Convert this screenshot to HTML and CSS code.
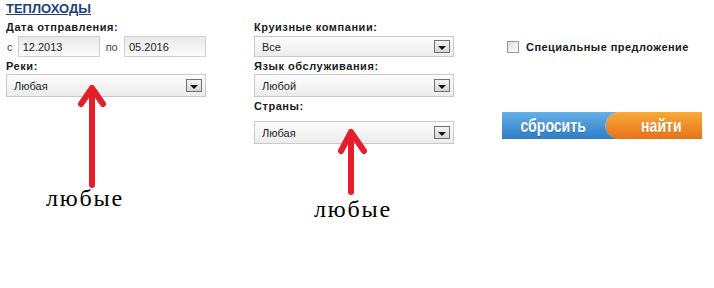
FILE: index.html
```html
<!DOCTYPE html>
<html lang="ru">
<head>
    <meta charset="UTF-8">
    <title>Теплоходы</title>
    <link rel="stylesheet" href="styles.css">
</head>
<body>
    <div class="search">
        <a href="#" class="search-title">ТЕПЛОХОДЫ</a>
        <div class="search-row">
            <!-- левая колонка -->
            <div class="search-col">
                <div class="label">Дата отправления:</div>
                <div class="dates">
                    <span class="dates-word">с</span>
                    <input class="date-input" type="text" value="12.2013">
                    <span class="dates-word dates-word-to">по</span>
                    <input class="date-input" type="text" value="05.2016">
                </div>
                <div class="label label-second">Реки:</div>
                <div class="select">
                    <span class="select-text">Любая</span>
                    <span class="select-btn"></span>
                </div>
            </div>
            <!-- средняя колонка -->
            <div class="search-col">
                <div class="label">Круизные компании:</div>
                <div class="select select-short">
                    <span class="select-text">Все</span>
                    <span class="select-btn"></span>
                </div>
                <div class="label label-second">Язык обслуживания:</div>
                <div class="select">
                    <span class="select-text">Любой</span>
                    <span class="select-btn"></span>
                </div>
                <div class="label label-third">Страны:</div>
                <div class="select select-last">
                    <span class="select-text">Любая</span>
                    <span class="select-btn"></span>
                </div>
            </div>
            <!-- правая колонка -->
            <div class="search-col search-col-right">
                <label class="special">
                    <span class="checkbox"></span>
                    Специальные предложение
                </label>
                <div class="buttons">
                    <button class="btn btn-reset"><span class="btn-text">сбросить</span></button>
                    <button class="btn btn-find"><span class="btn-text">найти</span></button>
                </div>
            </div>
        </div>
    </div>

    <!-- пометки поверх формы -->
    <svg class="marks" width="714" height="288" viewBox="0 0 714 288">
        <g stroke="#e41f2b" stroke-width="6" fill="none" stroke-linecap="round" stroke-linejoin="round">
            <path d="M92 185 L92 90"/>
            <path d="M81 104 L92 88 L103 104"/>
            <path d="M351 192 L351 133"/>
            <path d="M341 151 L351 132 L364 151"/>
        </g>
    </svg>
    <div class="mark-text mark-text-one">любые</div>
    <div class="mark-text mark-text-two">любые</div>
</body>
</html>
```

FILE: styles.css
```css
body {
    margin: 0;
    background: #ffffff;
    font-family: 'Liberation Sans', Arial, sans-serif;
    font-size: 11px;
    color: #1a1a1a;
    position: relative;
    width: 714px;
    height: 288px;
    overflow: hidden;
}

.search {
    padding-left: 6px;
}

.search-title {
    display: block;
    width: max-content;
    height: 19px;
    line-height: 17px;
    font-size: 13px;
    font-weight: bold;
    color: #23407c;
    text-decoration: underline;
}

.search-row {
    display: flex;
    gap: 48px;
}

.search-col {
    width: 200px;
    display: flex;
    flex-direction: column;
}

.label {
    height: 16px;
    line-height: 16px;
    font-weight: bold;
    font-size: 11px;
    letter-spacing: 0.55px;
    margin-bottom: 1px;
}

.label-second {
    margin-top: 1px;
    margin-bottom: 0;
}

.label-third {
    margin-top: 1px;
    margin-bottom: 7px;
}

.dates {
    display: flex;
    align-items: center;
    height: 21px;
}

.dates-word {
    color: #444;
    font-size: 11px;
    width: 11px;
    padding-left: 1px;
}

.dates-word-to {
    width: 19px;
    padding-left: 6px;
}

.date-input {
    box-sizing: border-box;
    width: 82px;
    height: 21px;
    margin: 0;
    padding: 0 0 0 4px;
    border: 1px solid #cfcfcf;
    background: linear-gradient(#e9e9e9, #fbfbfb);
    font-family: 'Liberation Sans', Arial, sans-serif;
    font-size: 11px;
    color: #222;
    outline: none;
}

.select {
    box-sizing: border-box;
    height: 23px;
    border: 1px solid #c9c9c9;
    background: linear-gradient(#fdfdfd, #ececec);
    display: flex;
    align-items: center;
    justify-content: space-between;
    padding: 0 3px 0 7px;
}

.select-short {
    height: 21px;
}

.select-text {
    font-size: 11px;
    color: #222;
}

.select-btn {
    box-sizing: border-box;
    width: 16px;
    height: 13px;
    border: 1px solid #707070;
    background: linear-gradient(#f4f4f4, #d6d6d6);
    position: relative;
}

.select-btn::after {
    content: '';
    position: absolute;
    left: 3px;
    top: 5px;
    border-left: 4px solid transparent;
    border-right: 4px solid transparent;
    border-top: 4px solid #111;
}

.search-col-right {
    width: 200px;
}

.special {
    display: flex;
    align-items: center;
    margin-top: 22px;
    padding-left: 5px;
    height: 12px;
    font-weight: bold;
    font-size: 11px;
    letter-spacing: 0.45px;
}

.checkbox {
    box-sizing: border-box;
    width: 12px;
    height: 12px;
    border: 1px solid #9a9a9a;
    background: linear-gradient(135deg, #dcdcdc, #ffffff);
    margin-right: 7px;
}

.buttons {
    display: flex;
    margin-top: 59px;
    height: 27px;
}

.btn {
    height: 27px;
    border: none;
    margin: 0;
    padding: 0;
    color: #ffffff;
    font-family: 'Liberation Sans', Arial, sans-serif;
    font-weight: bold;
    font-size: 19px;
    line-height: 27px;
    text-shadow: 0 1px 1px rgba(0, 0, 0, 0.2);
    cursor: pointer;
}

/* узкий шрифт кнопок */
.btn-text {
    display: inline-block;
    transform: scaleX(0.74);
}

.btn-reset {
    width: 115px;
    padding-right: 12px;
    background: linear-gradient(#66b0e6, #2e7dc6);
}

.btn-find {
    width: 96px;
    margin-left: -11px;
    padding-left: 14px;
    border-radius: 14px 0 0 14px;
    background: linear-gradient(#f8aa3a, #e8721a);
    box-shadow: -1px 0 0 rgba(255, 255, 255, 0.3);
}

.marks {
    position: absolute;
    left: 0;
    top: 0;
    pointer-events: none;
}

.mark-text {
    position: absolute;
    font-family: 'Liberation Serif', 'Times New Roman', serif;
    font-size: 24px;
    line-height: 24px;
    letter-spacing: 1.8px;
    color: #000;
}

.mark-text-one {
    left: 46px;
    top: 186px;
}

.mark-text-two {
    left: 314px;
    top: 197px;
}
```
